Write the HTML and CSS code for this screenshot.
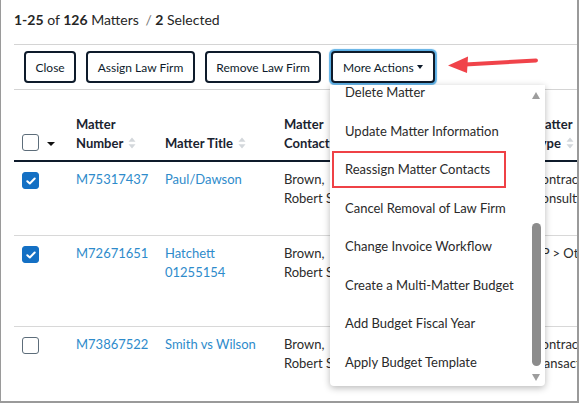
FILE: index.html
```html
<!DOCTYPE html>
<html>
<head>
<meta charset="utf-8">
<link rel="stylesheet" href="styles.css">
</head>
<body>
<div class="frame">
  <div class="summary"><b>1-25</b> of <b>126</b> Matters <span class="sep">/</span> <b>2</b> Selected</div>
  <div class="toolbar">
    <button class="btn">Close</button>
    <button class="btn">Assign Law Firm</button>
    <button class="btn">Remove Law Firm</button>
    <button class="btn btn-focus">More Actions<span class="caret"></span></button>
  </div>
  <div class="grid">
    <div class="row head">
      <div class="cell check-cell"><span class="cb"></span><span class="caret dark"></span></div>
      <div class="cell">Matter Number<svg class="sort" viewBox="0 0 8 12"><path d="M4 0.5 L7.5 4.8 H0.5Z M4 11.5 L7.5 7.2 H0.5Z"/></svg></div>
      <div class="cell">Matter Title<svg class="sort" viewBox="0 0 8 12"><path d="M4 0.5 L7.5 4.8 H0.5Z M4 11.5 L7.5 7.2 H0.5Z"/></svg></div>
      <div class="cell">Matter Contact<svg class="sort" viewBox="0 0 8 12"><path d="M4 0.5 L7.5 4.8 H0.5Z M4 11.5 L7.5 7.2 H0.5Z"/></svg></div>
      <div class="cell">Law Firm</div>
      <div class="cell">Matter Type<svg class="sort" viewBox="0 0 8 12"><path d="M4 0.5 L7.5 4.8 H0.5Z M4 11.5 L7.5 7.2 H0.5Z"/></svg></div>
    </div>
    <div class="row r1">
      <div class="cell check-cell"><span class="cb on"><svg viewBox="0 0 10 8"><path d="M1.3 4.2 L3.8 6.5 L8.7 1.5"/></svg></span></div>
      <div class="cell"><a class="link">M75317437</a></div>
      <div class="cell"><a class="link">Paul/Dawson</a></div>
      <div class="cell">Brown, Robert Smith</div>
      <div class="cell">Dawson LLP</div>
      <div class="cell">Contract/ Consulting</div>
    </div>
    <div class="row r2">
      <div class="cell check-cell"><span class="cb on"><svg viewBox="0 0 10 8"><path d="M1.3 4.2 L3.8 6.5 L8.7 1.5"/></svg></span></div>
      <div class="cell"><a class="link">M72671651</a></div>
      <div class="cell"><a class="link">Hatchett 01255154</a></div>
      <div class="cell">Brown, Robert Smith</div>
      <div class="cell">Hatchett LLP</div>
      <div class="cell">CP &gt; Other</div>
    </div>
    <div class="row r3">
      <div class="cell check-cell"><span class="cb"></span></div>
      <div class="cell"><a class="link">M73867522</a></div>
      <div class="cell"><a class="link">Smith vs Wilson</a></div>
      <div class="cell">Brown, Robert Smith</div>
      <div class="cell">Wilson LLP</div>
      <div class="cell">Contract/ Transaction</div>
    </div>
  </div>

  <div class="menu">
    <div class="menu-list">
      <ul class="items">
        <li>Delete Matter</li>
        <li>Update Matter Information</li>
        <li>Reassign Matter Contacts</li>
        <li>Cancel Removal of Law Firm</li>
        <li>Change Invoice Workflow</li>
        <li>Create a Multi-Matter Budget</li>
        <li>Add Budget Fiscal Year</li>
        <li>Apply Budget Template</li>
      </ul>
    </div>
    <div class="scroll">
      <span class="arrow up"></span>
      <div class="track"><div class="thumb"></div></div>
      <span class="arrow down"></span>
    </div>
  </div>

  <div class="highlight"></div>
  <svg class="pointer" viewBox="0 0 100 26" width="100" height="26">
    <path d="M24 14.5 L95 10.5" stroke="#f0434a" stroke-width="4" stroke-linecap="round" fill="none"/>
    <path d="M7 15.5 L27 6.5 L26 23 Z" fill="#f0434a"/>
  </svg>
</div>
</body>
</html>
```

FILE: styles.css
```css
* { box-sizing: border-box; }
html, body { margin: 0; padding: 0; background: #fff; }
body { font-family: Lato, "Open Sans", Arial, sans-serif; color: #2b2b2b; }

.frame {
  position: relative;
  width: 579px;
  height: 403px;
  overflow: hidden;
  border-left: 1px solid #9a9a9a;
  border-right: 2px solid #9a9a9a;
  border-bottom: 2px solid #9a9a9a;
  background: #fff;
}

.summary {
  padding: 11px 13px 15px;
  font-size: 14px;
  line-height: 18px;
  height: 44px;
  color: #262626;
}
.summary b { font-weight: 700; }
.summary .sep { color: #777; margin-left: 3px; }

.toolbar {
  margin-left: 13px;
  border-top: 1px solid #d4d4d4;
  border-bottom: 1px solid #d4d4d4;
  padding: 6px 10px 6px;
  display: flex;
  gap: 10px;
  height: 46px;
}
.btn {
  height: 32px;
  padding: 0 9.5px;
  border: 2px solid #0e1b2b;
  border-radius: 4px;
  background: #fff;
  font-family: inherit;
  font-size: 12px;
  color: #0e1b2b;
  display: flex;
  align-items: center;
  gap: 3px;
}
.btn-focus { box-shadow: 0 0 1px 1.5px #5cb0e6; padding: 0 10.5px 0 9.5px; }
.caret {
  display: inline-block;
  width: 0; height: 0;
  border-left: 3.5px solid transparent;
  border-right: 3.5px solid transparent;
  border-top: 4px solid #0e1b2b;
}

.grid { margin-left: 13px; width: 700px; }
.row {
  display: grid;
  grid-template-columns: 62px 89px 119px 88px 161px 72px;
  border-bottom: 1px solid #d8d8d8;
  font-size: 13px;
  line-height: 19px;
}
.row.head {
  height: 72px;
  border-bottom: 2px solid #0e1b2b;
  align-items: end;
  font-weight: 700;
  color: #1a2330;
}
.row.head .cell { padding-bottom: 7px; }
.row.r1 { height: 74px; }
.row.r2 { height: 91px; }
.row.r3 { height: 80px; border-bottom: none; }
.row .cell { padding: 8px 6px 0 0; }
.row.head .cell { padding-top: 0; }
.check-cell { padding-left: 8px !important; display: flex; align-items: center; gap: 8px; }
.row:not(.head) .check-cell { align-items: flex-start; padding-top: 10px !important; }
.row.head .check-cell { padding-bottom: 9px !important; }

.cb {
  width: 17px; height: 17px;
  border: 1.5px solid #5d6d7a;
  border-radius: 3px;
  display: inline-flex;
  align-items: center;
  justify-content: center;
  background: #fff;
  flex: none;
}
.cb.on { background: #1470c4; border-color: #1470c4; }
.cb svg { width: 10px; height: 8px; }
.cb svg path { stroke: #fff; stroke-width: 2; fill: none; stroke-linecap: round; stroke-linejoin: round; }
.caret.dark { border-top-color: #111; margin-top: 2px; border-left-width: 4px; border-right-width: 4px; }

.sort { width: 8px; height: 12px; margin-left: 5px; vertical-align: -1px; }
.sort path { fill: #d3d7db; }

.link { color: #2e8bcb; text-decoration: none; }

.menu {
  position: absolute;
  left: 329px;
  top: 85px;
  width: 215px;
  height: 301px;
  background: #fff;
  border-radius: 0 0 4px 4px;
  box-shadow: 0 2px 7px rgba(0, 0, 0, 0.28);
  display: flex;
}
.menu-list { flex: 1; overflow: hidden; }
.items { list-style: none; margin: -12px 0 0; padding: 0; }
.items li {
  height: 38.5px;
  line-height: 38.5px;
  padding-left: 15px;
  font-size: 13px;
  color: #2a2a2a;
  white-space: nowrap;
}
.scroll {
  width: 15px;
  padding: 6px 3px 4px 0;
  display: flex;
  flex-direction: column;
  align-items: center;
}
.arrow { width: 0; height: 0; border-left: 4.5px solid transparent; border-right: 4.5px solid transparent; }
.arrow.up { border-bottom: 7px solid #9d9d9d; margin-top: 1px; }
.arrow.down { border-top: 7px solid #9d9d9d; margin-bottom: 1px; }
.track { flex: 1; width: 9px; padding-top: 124px; }
.thumb { width: 9px; height: 143px; background: #8c8c8c; border-radius: 5px; }

.highlight {
  position: absolute;
  left: 331px;
  top: 151px;
  width: 174px;
  height: 37px;
  border: 2px solid #ef4146;
}
.pointer { position: absolute; left: 440px; top: 50px; }
```
